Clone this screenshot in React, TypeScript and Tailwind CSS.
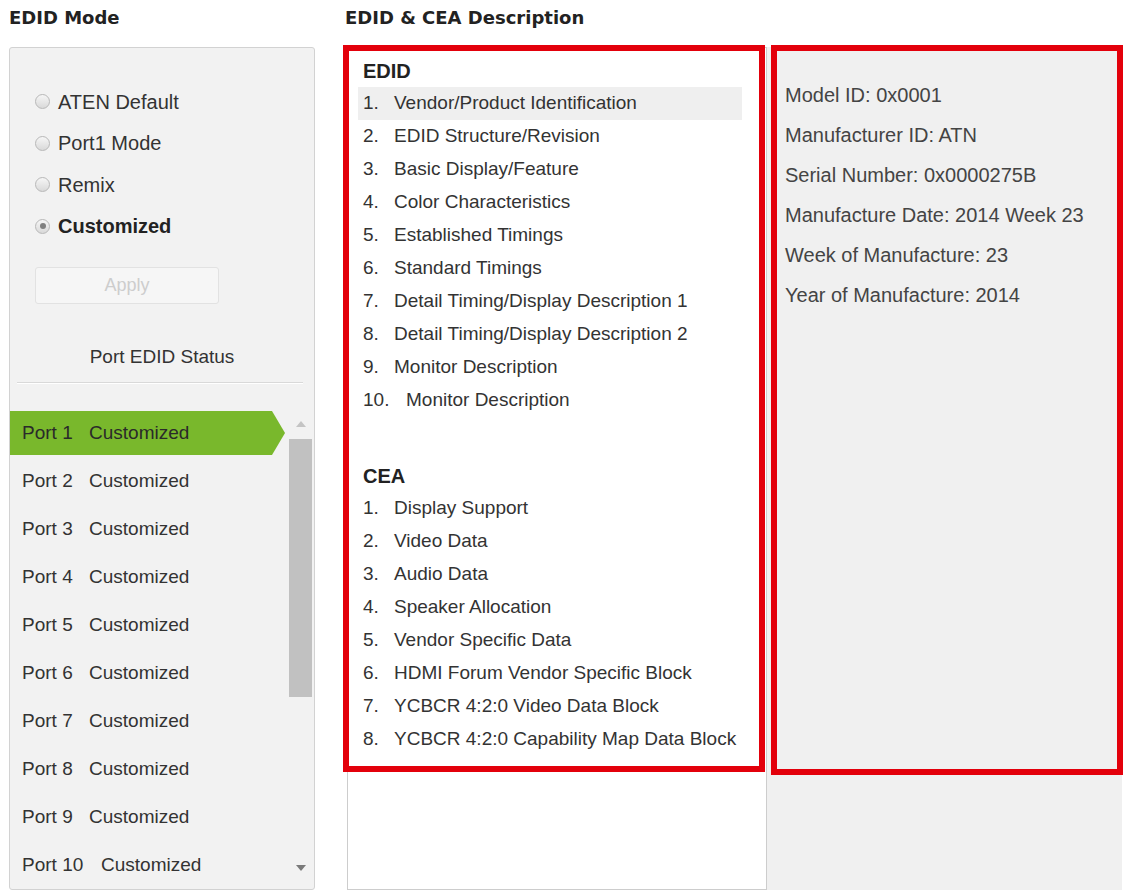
import React from "react";

const edidItems = [
  "Vendor/Product Identification",
  "EDID Structure/Revision",
  "Basic Display/Feature",
  "Color Characteristics",
  "Established Timings",
  "Standard Timings",
  "Detail Timing/Display Description 1",
  "Detail Timing/Display Description 2",
  "Monitor Description",
  "Monitor Description",
];

const ceaItems = [
  "Display Support",
  "Video Data",
  "Audio Data",
  "Speaker Allocation",
  "Vendor Specific Data",
  "HDMI Forum Vendor Specific Block",
  "YCBCR 4:2:0 Video Data Block",
  "YCBCR 4:2:0 Capability Map Data Block",
];

const info = [
  "Model ID: 0x0001",
  "Manufacturer ID: ATN",
  "Serial Number: 0x0000275B",
  "Manufacture Date: 2014 Week 23",
  "Week of Manufacture: 23",
  "Year of Manufacture: 2014",
];

function Radio({ label, checked }: { label: string; checked?: boolean }) {
  return (
    <div className="flex h-[41.5px] items-center pl-[25px]">
      <span className="flex h-[15px] w-[15px] items-center justify-center rounded-full border border-[#b8b8b8] bg-gradient-to-b from-[#f6f6f6] to-[#d9d9d9]">
        {checked && <span className="h-[6px] w-[6px] rounded-full bg-[#808080]" />}
      </span>
      <span className={"ml-[8px] text-[20px] " + (checked ? "font-bold text-[#222]" : "text-[#333]")}>{label}</span>
    </div>
  );
}

function ListRow({ n, text, active }: { n: number; text: string; active?: boolean }) {
  return (
    <div className={"ml-[9px] mr-[17px] flex h-[33px] items-center pl-[5px] " + (active ? "bg-[#efefef]" : "")}>
      <span className={n >= 10 ? "w-[43px]" : "w-[31px]"}>{n}.</span>
      <span>{text}</span>
    </div>
  );
}

export default function App() {
  const headerFont = { fontFamily: '"DejaVu Sans", sans-serif' };
  return (
    <div
      className="flex h-[892px] w-[1126px] overflow-hidden bg-white text-[#333]"
      style={{ fontFamily: '"Liberation Sans", Arial, sans-serif' }}
    >
      {/* Left column */}
      <div className="ml-[9px] flex w-[306px] flex-col">
        <div className="h-[47px] pt-[8px] text-[18px] font-bold leading-[20px] text-[#222]" style={headerFont}>
          EDID Mode
        </div>
        <div className="flex h-[843px] flex-col overflow-hidden rounded-[3px] border border-[#d2d2d2] bg-[#f2f2f2]">
          <div className="pt-[33px]">
            <Radio label="ATEN Default" />
            <Radio label="Port1 Mode" />
            <Radio label="Remix" />
            <Radio label="Customized" checked />
          </div>
          <div className="ml-[25px] mt-[20px] flex h-[38px] w-[184px] items-center justify-center rounded-[3px] border border-[#e2e2e2] bg-[#f6f6f6] text-[18px] text-[#cdcdcd]">
            Apply
          </div>
          <div className="mt-[41px] flex h-[24px] items-center justify-center text-[19px] text-[#333]">
            Port EDID Status
          </div>
          <div className="ml-[7px] mr-[11px] mt-[13px]">
            <div className="h-px bg-[#d9d9d9]" />
            <div className="h-px bg-white" />
          </div>
          <div className="mt-[25px] flex">
            <div className="flex w-[278px] flex-col">
              {Array.from({ length: 10 }, (_, i) => i + 1).map((n) =>
                n === 1 ? (
                  <div key={n} className="flex h-[48px] items-center">
                    <div className="flex h-[44px] w-[275px] items-center bg-[#79b82c] pl-[12px] text-[19px] text-[#2a2a2a] [clip-path:polygon(0_0,calc(100%_-_13px)_0,100%_50%,calc(100%_-_13px)_100%,0_100%)]">
                      <span className="w-[67px]">Port {n}</span>
                      <span>Customized</span>
                    </div>
                  </div>
                ) : (
                  <div key={n} className="flex h-[48px] items-center pl-[12px] text-[19px] text-[#333]">
                    <span className={n >= 10 ? "w-[79px]" : "w-[67px]"}>Port {n}</span>
                    <span>Customized</span>
                  </div>
                )
              )}
            </div>
            <div className="flex w-[25px] flex-col">
              <div className="flex h-[30px] items-center justify-center">
                <svg width="10" height="6" viewBox="0 0 10 6">
                  <polygon points="5,0 10,6 0,6" fill="#c4c4c4" />
                </svg>
              </div>
              <div className="mx-px h-[258px] bg-[#c1c1c1]" />
              <div className="mt-[156px] flex h-[30px] items-center justify-center">
                <svg width="10" height="6" viewBox="0 0 10 6">
                  <polygon points="0,0 10,0 5,6" fill="#7a7a7a" />
                </svg>
              </div>
            </div>
          </div>
        </div>
      </div>

      {/* Middle column */}
      <div className="ml-[28px] flex w-[424px] flex-col">
        <div className="h-[47px] pl-[2px] pt-[8px] text-[18px] font-bold leading-[20px] text-[#222]" style={headerFont}>
          EDID &amp; CEA Description
        </div>
        <div className="ml-[4px] h-[843px] w-[420px] border border-[#cdcdcd] bg-white">
          <div className="-ml-[5px] -mt-[3px] h-[727px] w-[422px] border-[6px] border-[#e3000b] text-[19px] text-[#333]">
            <div className="mt-[4px] flex h-[32px] items-center pl-[14px] text-[20px] font-bold text-[#222]">EDID</div>
            {edidItems.map((t, i) => (
              <ListRow key={"e" + i} n={i + 1} text={t} active={i === 0} />
            ))}
            <div className="mt-[42px] flex h-[33px] items-center pl-[14px] text-[20px] font-bold text-[#222]">CEA</div>
            {ceaItems.map((t, i) => (
              <ListRow key={"c" + i} n={i + 1} text={t} />
            ))}
          </div>
        </div>
      </div>

      {/* Right column */}
      <div className="flex w-[355px] flex-col">
        <div className="h-[47px]" />
        <div className="h-[843px] bg-[#f0f0f0]">
          <div className="-mt-[2px] ml-[4px] h-[730px] w-[352px] border-[6px] border-[#e3000b] pl-[8px] pt-[24px] text-[20px] text-[#444]">
            {info.map((t) => (
              <div key={t} className="flex h-[40px] items-center">
                {t}
              </div>
            ))}
          </div>
        </div>
      </div>
    </div>
  );
}
